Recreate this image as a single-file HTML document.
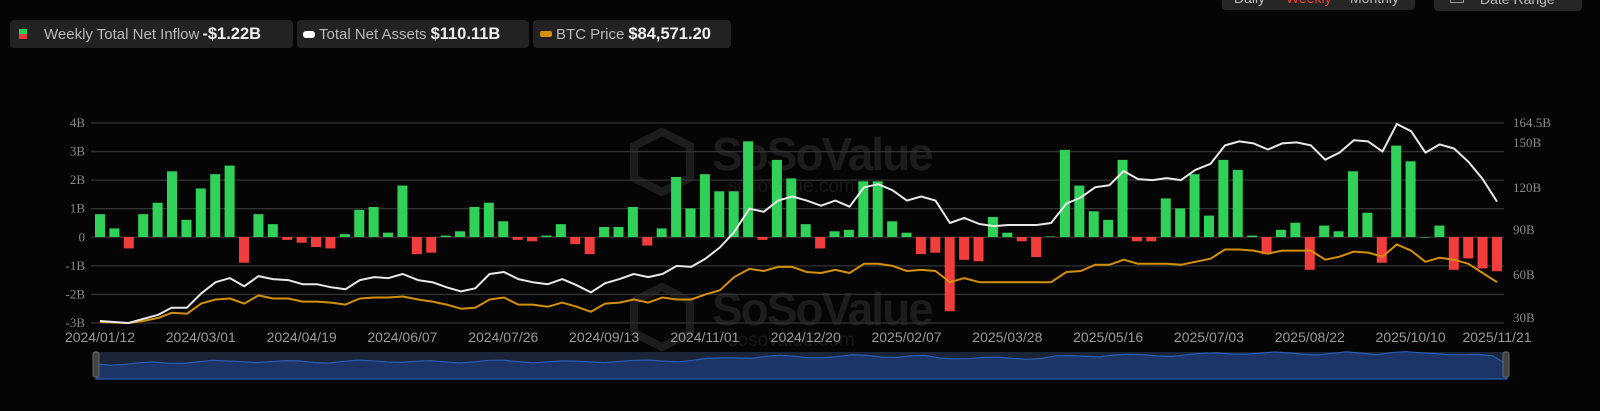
<!DOCTYPE html>
<html><head><meta charset="utf-8">
<style>
html,body{margin:0;padding:0;background:#050505;width:1600px;height:411px;overflow:hidden;font-family:"Liberation Sans",sans-serif}
.lg{position:absolute;top:20px;height:28px;background:#222;border-radius:4px;display:flex;align-items:center;color:#b8b8b8;font-size:15px;white-space:nowrap;overflow:hidden}
.lg b{color:#eee;font-size:16.5px;margin-left:4px}
.top{position:absolute;top:-12px;height:22px;background:#262626;border-radius:4px;color:#bbb;font-size:14px}
</style></head><body>
<div class="top" style="left:1222px;width:193px"><span style="position:absolute;left:12px;top:2px">Daily</span><span style="position:absolute;left:64px;top:2px;color:#e8402a">Weekly</span><span style="position:absolute;left:128px;top:2px">Monthly</span></div>
<div class="top" style="left:1434px;width:148px;top:-11px"><span style="position:absolute;left:16px;top:3px;width:12px;height:9px;border:1px solid #999"></span><span style="position:absolute;left:46px;top:2px">Date Range</span></div>

<div class="lg" style="left:10px;width:283px"><span style="display:inline-block;width:8px;height:10px;margin:0 17px 0 9px;position:relative"><i style="position:absolute;left:0;top:0;width:8px;height:5px;background:#2ecc55"></i><i style="position:absolute;left:0;top:5px;width:8px;height:5px;background:#f03a3a"></i></span>Weekly Total Net Inflow <b style="margin-left:3px">-$1.22B</b></div>
<div class="lg" style="left:297px;width:232px"><span style="display:inline-block;width:12px;height:7px;border-radius:3px;background:#fff;margin:0 4px 0 6px"></span>Total Net Assets <b>$110.11B</b></div>
<div class="lg" style="left:533px;width:198px"><span style="display:inline-block;width:12px;height:6px;border-radius:2px;background:#d4900a;margin:0 4px 0 7px"></span>BTC Price <b>$84,571.20</b></div>

<svg id="c" width="1600" height="411" style="position:absolute;left:0;top:0"></svg>
<script>
var vals=[0.8,0.3,-0.4,0.8,1.2,2.3,0.6,1.7,2.2,2.5,-0.9,0.8,0.45,-0.1,-0.2,-0.35,-0.4,0.1,0.95,1.05,0.15,1.8,-0.6,-0.55,0.05,0.2,1.05,1.2,0.55,-0.1,-0.15,0.05,0.45,-0.25,-0.6,0.35,0.35,1.05,-0.3,0.3,2.1,1.0,2.2,1.6,1.6,3.35,-0.1,2.7,2.05,0.45,-0.4,0.2,0.25,1.95,1.95,0.55,0.15,-0.6,-0.55,-2.6,-0.8,-0.85,0.7,0.15,-0.15,-0.7,0.02,3.05,1.8,0.9,0.6,2.7,-0.15,-0.15,1.35,1.0,2.2,0.75,2.7,2.35,0.05,-0.6,0.25,0.5,-1.15,0.4,0.2,2.3,0.85,-0.9,3.2,2.65,0.0,0.4,-1.15,-0.75,-1.1,-1.2];
var W=[[98,314],[126,316],[140,312],[155,308],[168,301],[183,301],[197,287],[211,276],[225,272],[239,280],[253,270],[267,273],[282,274],[296,278],[310,278],[324,281],[338,283],[352,274],[366,271],[380,272],[394,268],[409,274],[423,276],[437,281],[451,285],[465,282],[479,268],[493,266],[507,273],[521,276],[536,278],[550,273],[564,279],[578,286],[592,277],[606,273],[620,268],[634,271],[648,268],[662,260],[676,261],[690,253],[704,242],[718,227],[733,204],[747,207],[761,196],[775,192],[789,196],[803,201],[817,196],[831,202],[845,183],[859,180],[873,186],[887,196],[901,192],[915,196],[929,218],[943,213],[958,219],[972,221],[986,220],[1000,220],[1014,220],[1028,218],[1043,199],[1057,193],[1071,183],[1085,181],[1099,167],[1113,175],[1127,176],[1141,174],[1155,176],[1169,166],[1184,160],[1198,142],[1212,138],[1226,140],[1240,146],[1254,140],[1268,139],[1282,142],[1296,156],[1310,149],[1324,137],[1338,138],[1352,148],[1366,121],[1380,128],[1394,149],[1408,141],[1422,145],[1436,158],[1450,175],[1464,197]];
var O=[[98,315],[126,316],[140,314],[155,311],[168,306],[183,307],[197,297],[211,293],[225,292],[239,297],[253,289],[267,292],[282,292],[296,295],[310,295],[324,296],[338,298],[352,292],[366,291],[380,291],[394,290],[409,293],[423,295],[437,298],[451,302],[465,301],[479,293],[493,291],[507,298],[521,298],[536,300],[550,296],[564,300],[578,305],[592,297],[606,296],[620,293],[634,296],[648,291],[662,293],[676,293],[690,288],[704,284],[718,271],[733,263],[747,265],[761,261],[775,261],[789,266],[803,267],[817,264],[831,267],[845,258],[859,258],[873,260],[887,265],[901,264],[915,265],[929,276],[943,272],[958,276],[972,276],[986,276],[1000,276],[1014,276],[1028,276],[1043,266],[1057,265],[1071,259],[1085,259],[1099,254],[1113,258],[1127,258],[1141,258],[1155,259],[1169,256],[1184,253],[1198,244],[1212,244],[1226,245],[1240,248],[1254,245],[1268,245],[1282,245],[1296,254],[1310,251],[1324,246],[1338,247],[1352,251],[1366,239],[1380,245],[1394,256],[1408,252],[1422,254],[1436,258],[1450,267],[1464,276]];
var X0=100,DX=1397/97;
function mx(x){return X0+(x-98)*1397/1366}
function my(y){return 123+(y-120)*200/196}
var s='';
s+='<g fill="#1c1c1c" font-family="Liberation Sans,sans-serif" font-weight="bold"><text x="712" y="170" font-size="46" letter-spacing="-2">SoSoValue</text><text x="712" y="325" font-size="46" letter-spacing="-2">SoSoValue</text></g>';
s+='<g fill="none" stroke="#1c1c1c" stroke-width="8"><path d="M662 132 L690 146 L690 178 L662 192 L634 178 L634 146Z"/><path d="M662 287 L690 301 L690 333 L662 347 L634 333 L634 301Z"/></g>';
s+='<g fill="#181818" font-size="19" font-family="Liberation Sans,sans-serif"><text x="728" y="192">sosovalue.com</text><text x="728" y="346">sosovalue.com</text></g>';
var L=['4B','3B','2B','1B','0','-1B','-2B','-3B'];
for(var i=0;i<8;i++){var y=123+i*28.57;s+='<line x1="91" x2="1504" y1="'+y+'" y2="'+y+'" stroke="#333" stroke-width="1.3"/>';s+='<text x="85" y="'+(y+4)+'" text-anchor="end" fill="#888" font-size="13" font-family="Liberation Serif,serif">'+L[i]+'</text>';}
var R=[['164.5B',127],['150B',147],['120B',192],['90B',234],['60B',279],['30B',322]];
R.forEach(function(r){s+='<text x="1513" y="'+r[1]+'" fill="#888" font-size="13" font-family="Liberation Serif,serif">'+r[0]+'</text>';});
for(var i=0;i<vals.length;i++){var cx=X0+i*DX,v=vals[i],h=Math.abs(v)*28.57;var y=v>=0?237-h:237;s+='<rect x="'+(cx-5)+'" y="'+y+'" width="10" height="'+Math.max(h,0.5)+'" fill="'+(v>=0?'#30d158':'#f23d3d')+'"/>';}
function pl(a,c){return '<polyline fill="none" stroke="'+c+'" stroke-width="2" stroke-linejoin="round" points="'+a.map(function(p){return mx(p[0]).toFixed(1)+','+my(p[1]).toFixed(1)}).join(' ')+'"/>';}
s+=pl(O,'#d4900a');s+=pl(W,'#e8e8e8');
var D=['2024/01/12','2024/03/01','2024/04/19','2024/06/07','2024/07/26','2024/09/13','2024/11/01','2024/12/20','2025/02/07','2025/03/28','2025/05/16','2025/07/03','2025/08/22','2025/10/10'];
D.forEach(function(d,k){s+='<text x="'+(X0+k*7*DX)+'" y="342" text-anchor="middle" fill="#9a9a9a" font-size="14" font-family="Liberation Sans,sans-serif">'+d+'</text>';});
s+='<text x="1497" y="342" text-anchor="middle" fill="#9a9a9a" font-size="14" font-family="Liberation Sans,sans-serif">2025/11/21</text>';
s+='<rect x="96" y="352" width="1411" height="27" fill="#1b2538"/>';
var np='96,364';for(var i=0;i<vals.length;i++){var x=96+i*1411/97;var yy=364-(W[i]?(316-W[i][1])/196*12:0)+Math.sin(i*1.3)*1.2;np+=' '+x.toFixed(1)+','+yy.toFixed(1);}
s+='<polygon points="'+np+' 1507,379 96,379" fill="#1d3566" stroke="#2a5bb5" stroke-width="1.2"/>';
s+='<rect x="93" y="352" width="6" height="25" rx="2" fill="#444" stroke="#666"/><rect x="1503" y="352" width="6" height="25" rx="2" fill="#444" stroke="#666"/>';
document.getElementById('c').innerHTML=s;
</script>
</body></html>
